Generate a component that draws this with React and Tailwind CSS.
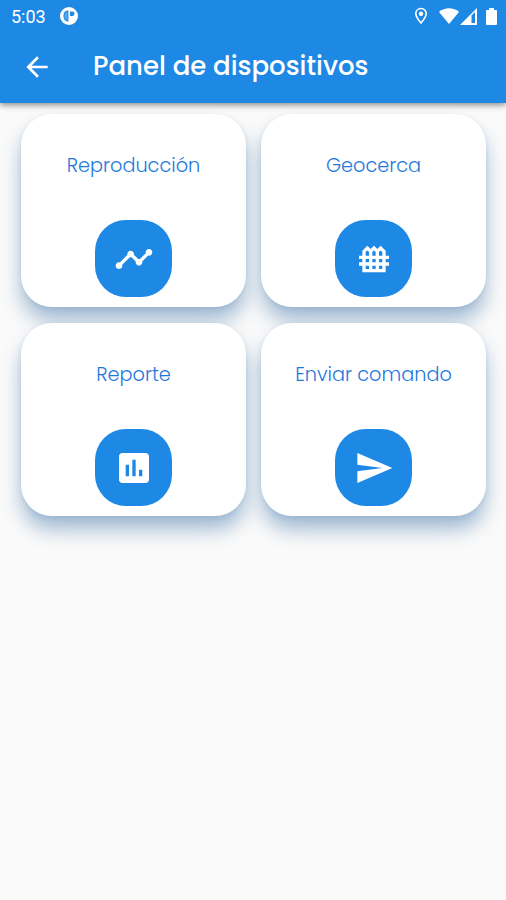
import React from "react";
import {
  MdArrowBack,
  MdAssessment,
  MdFence,
  MdSend,
  MdTimeline,
} from "react-icons/md";

const items = [
  { title: "Reproducción", Icon: MdTimeline },
  { title: "Geocerca", Icon: MdFence },
  { title: "Reporte", Icon: MdAssessment },
  { title: "Enviar comando", Icon: MdSend },
];

const StatusBar = () => {
  return (
    <div className="flex h-8 items-center justify-between pl-[11px] pr-[9px]">
      <div className="flex items-center">
        <span className="w-[49px] pt-px font-[Roboto,sans-serif] text-[18px] leading-8">
          5:03
        </span>
        <svg viewBox="0 0 18 18" className="h-[18px] w-[18px]">
          <circle cx="9" cy="9" r="9" fill="#fff" />
          <path
            d="M7.800 4.200v9.800C5.400 13.600 4 11.600 4 9s1.300-4.500 3.800-4.800z"
            fill="#5aa7ec"
            stroke="#1e88e5"
            strokeWidth="1.200"
          />
          <path d="M10 4.500h2.200a2.300 2.300 0 0 1 0 4.600H10z" fill="#1e88e5" />
        </svg>
      </div>

      <div className="flex items-center">
        <svg viewBox="0 0 14 18" className="mr-[11px] h-[18px] w-[14px]">
          <path
            d="M7 1.500c-3 0-5.200 2.200-5.200 5.100C1.800 10.200 7 16 7 16s5.200-5.800 5.200-9.400C12.200 3.700 10 1.500 7 1.500z"
            fill="none"
            stroke="#fff"
            strokeWidth="1.600"
          />
          <circle cx="7" cy="6.700" r="2.200" fill="#fff" />
        </svg>
        <svg viewBox="0 0 20 16" className="h-4 w-5">
          <path d="M0 4C5.500-1 14.500-1 20 4L10 16z" fill="#fff" />
        </svg>
        <svg viewBox="0 0 17 17" className="ml-px h-[17px] w-[17px]">
          <path d="M0 17L17 0v17z" fill="#fff" />
          <path d="M11.500 7.500L15 4v11h-3.500z" fill="#1e88e5" />
        </svg>
        <svg viewBox="0 0 11 17" className="ml-[9px] h-[17px] w-[11px]">
          <path
            d="M3 0h5v2h2a1 1 0 0 1 1 1v13a1 1 0 0 1-1 1H1a1 1 0 0 1-1-1V3a1 1 0 0 1 1-1h2z"
            fill="#fff"
          />
        </svg>
      </div>
    </div>
  );
};

const Header = () => {
  return (
    <header className="relative h-[103px] bg-[#1e88e5] text-white shadow-[0_2px_6px_rgba(0,0,0,0.45)]">
      <StatusBar />
      <div className="flex h-[71px] items-center pb-px pl-[21px]">
        <button aria-label="Volver">
          <MdArrowBack className="h-8 w-8" />
        </button>
        <h1 className="ml-10 whitespace-nowrap pb-0.5 text-[26px] font-medium">
          Panel de dispositivos
        </h1>
      </div>
    </header>
  );
};

const DeviceCard = ({ title, Icon }) => {
  return (
    <button className="flex h-[193px] flex-col items-center rounded-[31px] bg-white pt-[37px] shadow-[0_14px_20px_-1px_rgba(21,84,150,0.4),0_1px_5px_rgba(21,84,150,0.1)]">
      <span className="whitespace-nowrap text-[19.3px] font-light leading-[30px] text-[#1e78dc]">
        {title}
      </span>
      <span className="mt-[39px] flex h-[77px] w-[77px] items-center justify-center rounded-[31px] bg-[#1e88e5]">
        <Icon className="h-10 w-10 text-white" />
      </span>
    </button>
  );
};

const App = () => {
  return (
    <div className="min-h-screen bg-[#fafafa] font-[Poppins,Inter,sans-serif]">
      <Header />
      <main className="grid grid-cols-2 gap-x-[15px] gap-y-4 pl-[21px] pr-5 pt-[11px]">
        {items.map((item) => (
          <DeviceCard key={item.title} {...item} />
        ))}
      </main>
    </div>
  );
};

export default App;
